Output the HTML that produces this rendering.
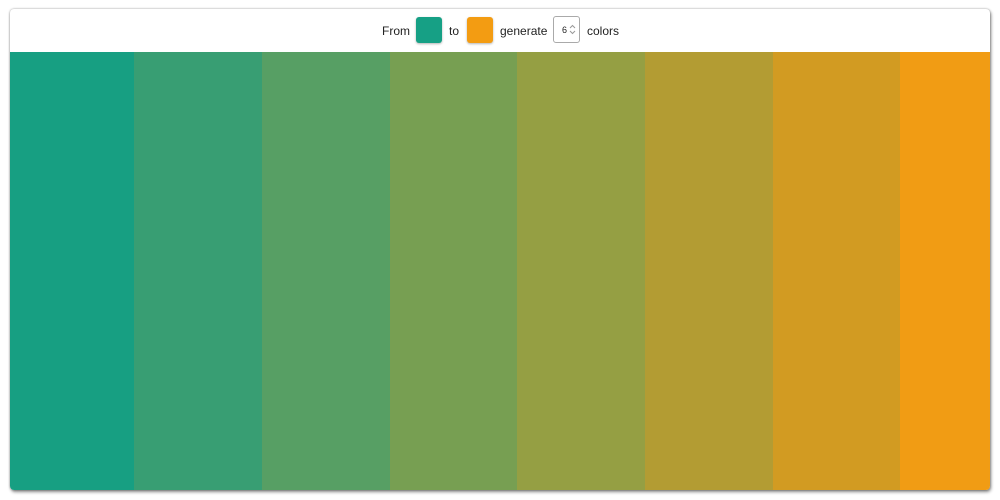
<!DOCTYPE html>
<html><head><style>
body{margin:0;width:1000px;height:500px;background:#fff;position:relative;overflow:hidden;font-family:"Liberation Sans",sans-serif;}
.frame{position:absolute;left:10px;top:9px;width:980px;height:481px;border-radius:4px;box-shadow:0 0 2px rgba(0,0,0,.35),1px 2px 3px rgba(0,0,0,.45);overflow:hidden;background:#fff;}
.hdr{position:absolute;left:0;top:0;width:980px;height:43px;font-size:12px;color:#222;}
.hdr span{position:absolute;top:15px;}
.sw{position:absolute;top:8px;width:26px;height:26px;border-radius:3px;box-shadow:0 1px 2px rgba(0,0,0,.3);}
.num{position:absolute;left:543px;top:7px;width:25px;height:25px;border:1px solid #aaa;border-radius:3px;font-size:9px;background:#fff;}
.col{position:absolute;top:43px;height:438px;}
</style></head><body>
<div class="frame">
<div class="hdr">
<span style="left:372px">From</span>
<div class="sw" style="left:406px;background:#16a085"></div>
<span style="left:439px">to</span>
<div class="sw" style="left:457px;background:#f39c12"></div>
<span style="left:490px">generate</span>
<div class="num"><span style="left:8px;top:8px;font-size:9px">6</span>
<svg style="position:absolute;left:15px;top:7px" width="7" height="11" viewBox="0 0 7 11"><path d="M1 4 L3.5 1.5 L6 4 M1 7 L3.5 9.5 L6 7" fill="none" stroke="#999" stroke-width="1"/></svg></div>
<span style="left:577px">colors</span>
</div>
<div class="col" style="left:0;width:124px;background:#179f82"></div>
<div class="col" style="left:124px;width:128px;background:#389e73"></div>
<div class="col" style="left:252px;width:128px;background:#579f64"></div>
<div class="col" style="left:380px;width:127px;background:#779f52"></div>
<div class="col" style="left:507px;width:128px;background:#959f43"></div>
<div class="col" style="left:635px;width:128px;background:#b39c33"></div>
<div class="col" style="left:763px;width:127px;background:#d29b22"></div>
<div class="col" style="left:890px;width:90px;background:#f19c14"></div>
</div>
</body></html>
